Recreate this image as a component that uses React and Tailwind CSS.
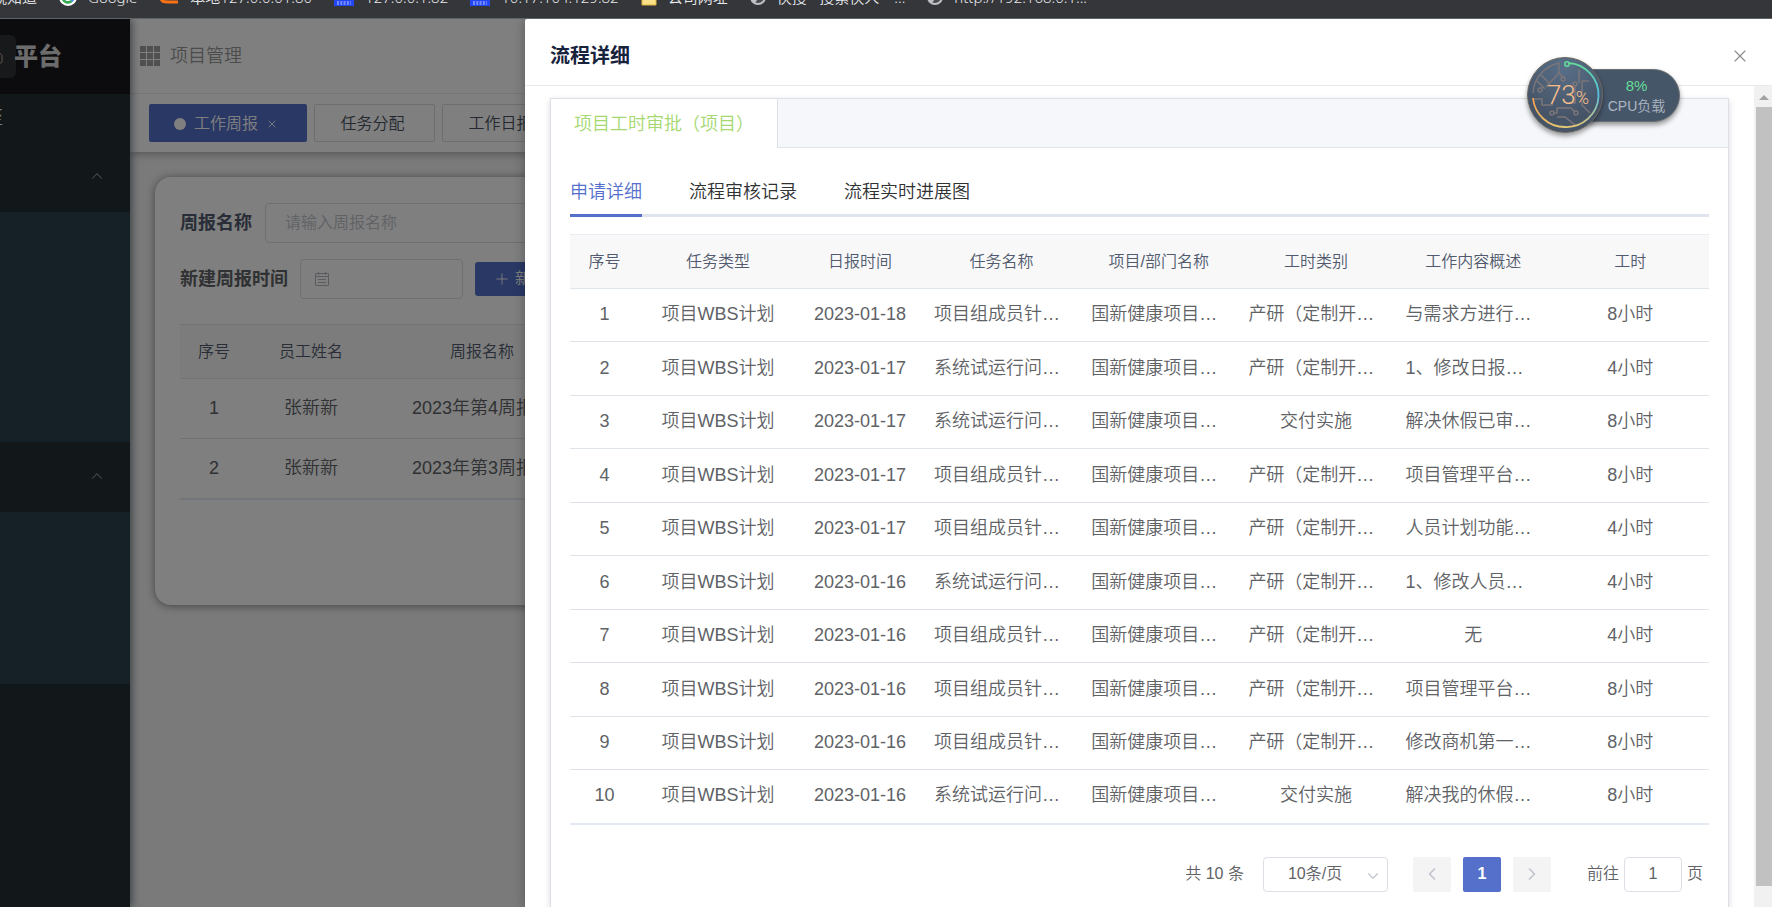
import { useState } from "react";
import { ChevronUp, ChevronDown, ChevronLeft, ChevronRight, Plus, X, House } from "lucide-react";
import clsx from "clsx";

const bookmarks = [
  { icon: null, label: "就知道" },
  { icon: "google", label: "Google" },
  { icon: "orange", label: "本地127.0.0.01:80" },
  { icon: "baidu", label: "127.0.0.1:82" },
  { icon: "baidu", label: "10.17.104.129:82" },
  { icon: "folder", label: "公司网址" },
  { icon: "globe", label: "快搜 - 搜索快人一..." },
  { icon: "globe", label: "http://192.168.0.1..." },
];

const reports = [
  { id: 1, user: "张新新", name: "2023年第4周报告" },
  { id: 2, user: "张新新", name: "2023年第3周报告" },
];

const columns = [
  { key: "id", title: "序号", width: "w-[69px]" },
  { key: "type", title: "任务类型", width: "w-[158px]" },
  { key: "date", title: "日报时间", width: "w-[126px]" },
  { key: "task", title: "任务名称" },
  { key: "project", title: "项目/部门名称" },
  { key: "category", title: "工时类别" },
  { key: "content", title: "工作内容概述" },
  { key: "hours", title: "工时" },
];

const rows = [
  ["2023-01-18", "项目组成员针…", "产研（定制开…", "与需求方进行…", "8小时"],
  ["2023-01-17", "系统试运行问…", "产研（定制开…", "1、修改日报…", "4小时"],
  ["2023-01-17", "系统试运行问…", "交付实施", "解决休假已审…", "8小时"],
  ["2023-01-17", "项目组成员针…", "产研（定制开…", "项目管理平台…", "8小时"],
  ["2023-01-17", "项目组成员针…", "产研（定制开…", "人员计划功能…", "4小时"],
  ["2023-01-16", "系统试运行问…", "产研（定制开…", "1、修改人员…", "4小时"],
  ["2023-01-16", "项目组成员针…", "产研（定制开…", "无", "4小时"],
  ["2023-01-16", "项目组成员针…", "产研（定制开…", "项目管理平台…", "8小时"],
  ["2023-01-16", "项目组成员针…", "产研（定制开…", "修改商机第一…", "8小时"],
  ["2023-01-16", "系统试运行问…", "交付实施", "解决我的休假…", "8小时"],
].map(([date, task, category, content, hours], index) => ({
  id: String(index + 1),
  type: "项目WBS计划",
  date,
  task,
  project: "国新健康项目…",
  category,
  content,
  hours,
}));

function BookmarkIcon({ name }) {
  if (name === "google") {
    return (
      <svg className="h-5 w-[18px]" viewBox="0 0 20 20">
        <circle cx="10" cy="10" r="10" fill="#fff" />
        <path d="M4.5 12.5a6 6 0 0 0 9.5 2" fill="none" stroke="#34a853" strokeWidth="3" />
        <path d="M10 10h6a6 6 0 0 1-2 4.5" fill="none" stroke="#4285f4" strokeWidth="3" />
        <path d="M4.5 12.5a6 6 0 0 1 0-5" fill="none" stroke="#fbbc05" strokeWidth="3" />
        <path d="M4.5 7.5a6 6 0 0 1 9.5-2" fill="none" stroke="#ea4335" strokeWidth="3" />
      </svg>
    );
  }
  if (name === "orange") {
    return (
      <svg className="h-5 w-5" viewBox="0 0 20 20">
        <path d="M17 3H8C3 3 2 7 2 10c0 5 3 5 7 5h10" fill="none" stroke="#f97316" strokeWidth="3" />
      </svg>
    );
  }
  if (name === "baidu") {
    return (
      <svg className="h-5 w-5" viewBox="0 0 20 20">
        <rect width="20" height="19" fill="#2346f5" />
        <path d="M3 15h14M3 17h14" stroke="#c3ccff" strokeWidth="1" strokeDasharray="2 1.3" />
      </svg>
    );
  }
  if (name === "folder") {
    return (
      <svg className="h-5 w-4" viewBox="0 0 16 20">
        <path d="M1 3h6l2 2h6v13H1z" fill="#fbe08a" stroke="#e0b43c" />
      </svg>
    );
  }
  return (
    <svg className="h-5 w-4" viewBox="0 0 16 20">
      <circle cx="8" cy="10" r="7" fill="#4a4b50" stroke="#bdc1c6" strokeWidth="2" />
      <path d="M8 3a7 7 0 0 0-5 12c3 1 4-1 4-3l4-2-1-4z" fill="#bdc1c6" />
    </svg>
  );
}

function BookmarkBar() {
  return (
    <div className="h-[19px] shrink-0 overflow-hidden border-b border-[#5f6368] bg-[#35363a]">
      <div className="-mt-[13px] flex gap-[22px] font-['Noto_Sans','Noto_Sans_CJK_SC',sans-serif] text-[15px] leading-5 whitespace-nowrap text-[#e8eaed]">
        {bookmarks.map((item, index) => (
          <a href="#" key={index} className={clsx("flex", item.icon ? "gap-[11px]" : "-ml-2")}>
            {item.icon && <BookmarkIcon name={item.icon} />}
            <span>{item.label}</span>
          </a>
        ))}
      </div>
    </div>
  );
}

function Sidebar() {
  return (
    <aside className="relative z-10 flex w-[130px] shrink-0 flex-col bg-[#243034] text-white shadow-[2px_0_8px_rgba(0,21,41,0.5)]">
      <div className="flex h-[75px] shrink-0 items-center bg-[#18191e]">
        <div className="mr-[-2px] flex h-[43px] w-4 items-center overflow-hidden rounded-r-md bg-[#303236]">
          <House className="-ml-3 h-4 w-4 shrink-0 text-[#c9a3a0]" strokeWidth={1.5} />
        </div>
        <span className="text-[24px] font-black text-[#d8d8d8]">平台</span>
      </div>
      <div className="flex h-[48px] shrink-0 items-center overflow-hidden">
        <span className="-ml-[15px] text-[18px]">至</span>
      </div>
      <button className="flex h-[70px] shrink-0 items-center justify-end pr-6 pb-[2px]" aria-label="展开菜单">
        <ChevronUp className="h-[18px] w-[18px] text-[#9aa0a3]" strokeWidth={1.4} />
      </button>
      <div className="h-[230px] shrink-0 bg-[#2a424e]" />
      <button className="flex h-[70px] shrink-0 items-center justify-end pr-6 pb-[2px]" aria-label="展开菜单">
        <ChevronUp className="h-[18px] w-[18px] text-[#9aa0a3]" strokeWidth={1.4} />
      </button>
      <div className="h-[172px] shrink-0 bg-[#2a424e]" />
    </aside>
  );
}

function WeeklyReports() {
  return (
    <div className="mx-[25px] mt-[25px] h-[428px] rounded-2xl bg-white px-[25px] pt-[26px] shadow-[0_1px_8px_rgba(0,0,0,0.45)]">
      <div className="mb-4 flex items-center">
        <label htmlFor="report-name" className="mr-[13px] text-[18px] font-bold text-[#515a6e]">周报名称</label>
        <input
          id="report-name"
          placeholder="请输入周报名称"
          className="h-10 w-80 rounded border border-[#dcdfe6] px-[19px] text-base placeholder:text-[#c0c4cc]"
        />
      </div>
      <div className="mb-[25px] flex items-center">
        <label htmlFor="report-date" className="mr-3 text-[18px] font-bold text-[#606266]">新建周报时间</label>
        <div className="relative mr-3">
          <input id="report-date" className="h-10 w-[163px] rounded border border-[#dcdfe6] pl-10" />
          <svg className="absolute top-3 left-[14px] h-4 w-4" viewBox="0 0 16 16" fill="none" stroke="#b4b8c0">
            <path d="M1.5 2.5h13v12h-13zM1.5 5.5h13M4.5 1v3M11.5 1v3M4 8.5h8M4 11.5h8" />
          </svg>
        </div>
        <button className="flex h-[34px] items-center gap-1 rounded-[3px] bg-[#5470cb] px-[18px] text-base whitespace-nowrap text-white">
          <Plus className="h-[18px] w-[18px]" strokeWidth={1.2} />
          新建
        </button>
      </div>
      <table className="w-full table-fixed border-b-2 border-[#e4eaf4] text-center">
        <thead className="bg-[#f8f8f8] text-base text-[#515a6e]">
          <tr className="h-[54px] border-y border-[#e4e8ee]">
            <th className="w-[68px] font-[350]">序号</th>
            <th className="w-[126px] font-[350]">员工姓名</th>
            <th className="w-[216px] font-[350]">周报名称</th>
            <th></th>
          </tr>
        </thead>
        <tbody className="text-[18px] text-[#606266]">
          {reports.map((report) => (
            <tr key={report.id} className="h-[60px] border-b border-[#dfe3ea]">
              <td>{report.id}</td>
              <td>{report.user}</td>
              <td>{report.name}</td>
              <td></td>
            </tr>
          ))}
        </tbody>
      </table>
    </div>
  );
}

function MainPage() {
  return (
    <div className="flex h-full">
      <Sidebar />
      <main className="min-w-0 flex-1 bg-[#f4f4f4]">
        <div className="bg-white shadow-[0_2px_8px_rgba(0,0,0,0.3)]">
          <header className="flex h-[75px] items-center gap-[10px] border-b border-[#ececec] pl-[10px]">
            <svg className="h-5 w-5" viewBox="0 0 20 20" fill="#a0a0a0">
              {[0, 7, 14].map((y) => [0, 7, 14].map((x) => <rect key={x + "-" + y} x={x} y={y} width="6" height="6" />))}
            </svg>
            <h1 className="text-[18px] text-[#999]">项目管理</h1>
          </header>
          <nav className="flex h-[58px] items-center gap-[7px] pl-[19px] text-base">
            <button className="flex h-[38px] w-[158px] items-center justify-center gap-2 rounded-[2px] bg-[#5470cb] pt-px pr-1 text-white">
              <span className="h-3 w-3 rounded-full bg-white" />
              工作周报
              <X className="h-3 w-3" strokeWidth={1.8} />
            </button>
            <button className="h-[38px] w-[121px] rounded-[2px] border border-[#d8dce5] pt-px pr-1 text-[#495060]">任务分配</button>
            <button className="h-[38px] w-[121px] rounded-[2px] border border-[#d8dce5] pt-px pr-1 text-[#495060]">工作日报</button>
          </nav>
        </div>
        <WeeklyReports />
      </main>
    </div>
  );
}

function TaskTable() {
  return (
    <table className="w-full table-fixed border-b-2 border-[#e4eaf4] text-center">
      <thead className="bg-[#f8f8f8] text-base text-[#515a6e]">
        <tr className="h-[54px] border-t border-b border-t-[#e9edf4] border-b-[#dfe6ec]">
          {columns.map((column) => (
            <th key={column.key} className={clsx("font-[350]", column.width)}>
              {column.title}
            </th>
          ))}
        </tr>
      </thead>
      <tbody className="text-[18px] text-[#606266]">
        {rows.map((row) => (
          <tr key={row.id} className="h-[53px] border-b border-[#dfe3ea] even:h-[54px]">
            {columns.map((column) => (
              <td
                key={column.key}
                className={clsx("pb-px whitespace-nowrap", row[column.key].endsWith("…") && "pl-[11px] text-left")}
              >
                {row[column.key]}
              </td>
            ))}
          </tr>
        ))}
      </tbody>
    </table>
  );
}

function Pagination() {
  return (
    <div className="mt-8 flex h-[35px] items-center justify-end pr-[6px] text-base text-[#606266]">
      <span className="mr-[19px]">共 10 条</span>
      <div className="relative mr-[25px]">
        <select
          aria-label="每页条数"
          className="h-[35px] w-[125px] appearance-none rounded border border-[#dcdfe6] bg-white pl-6 text-base"
        >
          <option>10条/页</option>
          <option>20条/页</option>
        </select>
        <ChevronDown className="pointer-events-none absolute top-[10px] right-[6px] h-[18px] w-[18px] text-[#c0c4cc]" strokeWidth={1.5} />
      </div>
      <div className="mr-9 flex gap-3">
        <button aria-label="上一页" className="flex h-[35px] w-[38px] items-center justify-center rounded-[2px] bg-[#f4f4f5] text-[#c0c4cc]">
          <ChevronLeft className="h-5 w-5" />
        </button>
        <button className="h-[35px] w-[38px] rounded-[2px] bg-[#5470cb] font-bold text-white">1</button>
        <button aria-label="下一页" className="flex h-[35px] w-[38px] items-center justify-center rounded-[2px] bg-[#f4f4f5] text-[#c0c4cc]">
          <ChevronRight className="h-5 w-5" />
        </button>
      </div>
      <label className="flex items-center gap-[5px]">
        前往
        <input defaultValue="1" className="h-[35px] w-[58px] rounded border border-[#dcdfe6] text-center text-base" />
        页
      </label>
    </div>
  );
}

function Drawer() {
  const [tab, setTab] = useState("申请详细");

  return (
    <section className="absolute inset-y-0 right-0 left-[525px] z-30 flex flex-col rounded-tl-[2px] bg-white shadow-[0_0_12px_rgba(0,0,0,0.3)]">
      <header className="flex h-[67px] shrink-0 items-center justify-between border-b border-[#e8eaec] pt-2 pr-[22px] pl-[25px]">
        <h2 className="text-[20px] font-bold text-[#17233d]">流程详细</h2>
        <button aria-label="关闭">
          <X className="h-5 w-5 text-[#8c8c8c]" strokeWidth={1.4} />
        </button>
      </header>
      <div className="flex min-h-0 flex-1">
        <div className="min-w-0 flex-1 overflow-hidden pt-3 pr-[25px] pl-[25px]">
          <div className="h-full border border-b-0 border-[#dcdfe6] shadow-[0_2px_6px_rgba(0,0,0,0.15)]">
            <div className="flex h-[49px] border-b border-[#dfe4ed] bg-[#f5f7fa]">
              <button className="-mb-px h-[49px] border-r border-[#dcdfe6] bg-white px-[23px] pt-[2px] text-[18px] text-[#a5d86e]">
                项目工时审批（项目）
              </button>
            </div>
            <div className="px-[19px] pt-[22px]">
              <div className="mb-[17px] flex h-[47px] gap-[47px] border-b-[3px] border-[#dfe4ed] text-[18px]">
                {["申请详细", "流程审核记录", "流程实时进展图"].map((name) => (
                  <button
                    key={name}
                    onClick={() => setTab(name)}
                    className={clsx(
                      "-mb-[3px] border-b-[3px]",
                      tab === name ? "border-[#5470cb] text-[#5470cb]" : "border-transparent text-[#303133]"
                    )}
                  >
                    {name}
                  </button>
                ))}
              </div>
              <TaskTable />
              <Pagination />
            </div>
          </div>
        </div>
        <div className="flex w-[18px] flex-col items-end bg-[#f1f1f1]">
          <svg className="h-[21px] w-4" viewBox="0 0 16 21">
            <path d="M3 14l5-5 5 5z" fill="#a3a3a3" />
          </svg>
          <div className="mb-[21px] w-4 flex-1 bg-[#c1c1c1]" />
        </div>
      </div>
    </section>
  );
}

function CpuWidget() {
  return (
    <div className="absolute top-[38px] right-[92px] z-40 flex h-[76px] w-[153px] items-center">
      <div className="ml-9 flex h-[53px] flex-1 flex-col items-center justify-center rounded-r-full border border-[#6b6f73] bg-[#465669] pt-px pl-[30px] text-[15px] leading-[21px] shadow-[0_3px_5px_rgba(0,0,0,0.4)]">
        <span className="text-[#63dc98]">8%</span>
        <span className="text-[14px] text-[#adb6c2]">CPU负载</span>
      </div>
      <div className="absolute inset-y-0 left-0 w-[76px] rounded-full shadow-[0_3px_5px_rgba(0,0,0,0.4)]">
        <svg className="h-full w-full" viewBox="0 0 76 76" fill="none">
          <defs>
            <radialGradient id="disc" cx="0.5" cy="0.1" r="0.7">
              <stop offset="0" stopColor="#587089" />
              <stop offset="1" stopColor="#465467" />
            </radialGradient>
            <linearGradient id="arcRight" x1="0" y1="0" x2="0" y2="1">
              <stop offset="0" stopColor="#63dc98" />
              <stop offset="0.5" stopColor="#55bfe0" />
              <stop offset="1" stopColor="#e5c874" />
            </linearGradient>
            <linearGradient id="arcLeft" x1="0" y1="0" x2="1" y2="1">
              <stop offset="0" stopColor="#f0a050" />
              <stop offset="1" stopColor="#e5c874" />
            </linearGradient>
          </defs>
          <circle cx="38" cy="38" r="37.5" fill="url(#disc)" stroke="#6b665f" />
          <g stroke="#7b7579" strokeWidth="1.5">
            <path d="M6 36a32 32 0 0 1 27-30M32 6v10L19 30M14 18l9 9M10 24l8 8M32 16l5 5M15 31v-1M6 42h9v6h11M52 12v14M48 28v18h-7M62 24h-7v24l8 8M26 56h4v-5h14l4 4M30 60h8l10 8" />
            <circle cx="13" cy="33" r="2" />
            <circle cx="36" cy="22" r="2" />
            <circle cx="48" cy="27" r="2" />
            <circle cx="25" cy="56" r="2" />
            <circle cx="49" cy="56" r="2" />
          </g>
          <path d="M41 6a32 32 0 0 1-3 64" stroke="url(#arcRight)" strokeWidth="1.8" />
          <path d="M38 70A32 32 0 0 1 6 41" stroke="url(#arcLeft)" strokeWidth="1.8" />
          <circle cx="40" cy="7" r="2.2" stroke="#63dc98" strokeWidth="1.5" />
        </svg>
        <div className="absolute inset-0 flex items-center justify-center pl-[6px] font-['Roboto',sans-serif] text-[26px] text-[#f8bd8c]">
          73<span className="pt-1 text-[18px]">%</span>
        </div>
      </div>
    </div>
  );
}

export default function App() {
  return (
    <div className="flex h-screen flex-col overflow-hidden bg-white font-['Liberation_Sans','Noto_Sans_CJK_SC',sans-serif] font-[350]">
      <BookmarkBar />
      <div className="relative min-h-0 flex-1 overflow-hidden">
        <MainPage />
        <div className="absolute inset-0 z-20 bg-black/50" />
        <Drawer />
        {/* floating system monitor */}
        <CpuWidget />
      </div>
    </div>
  );
}
